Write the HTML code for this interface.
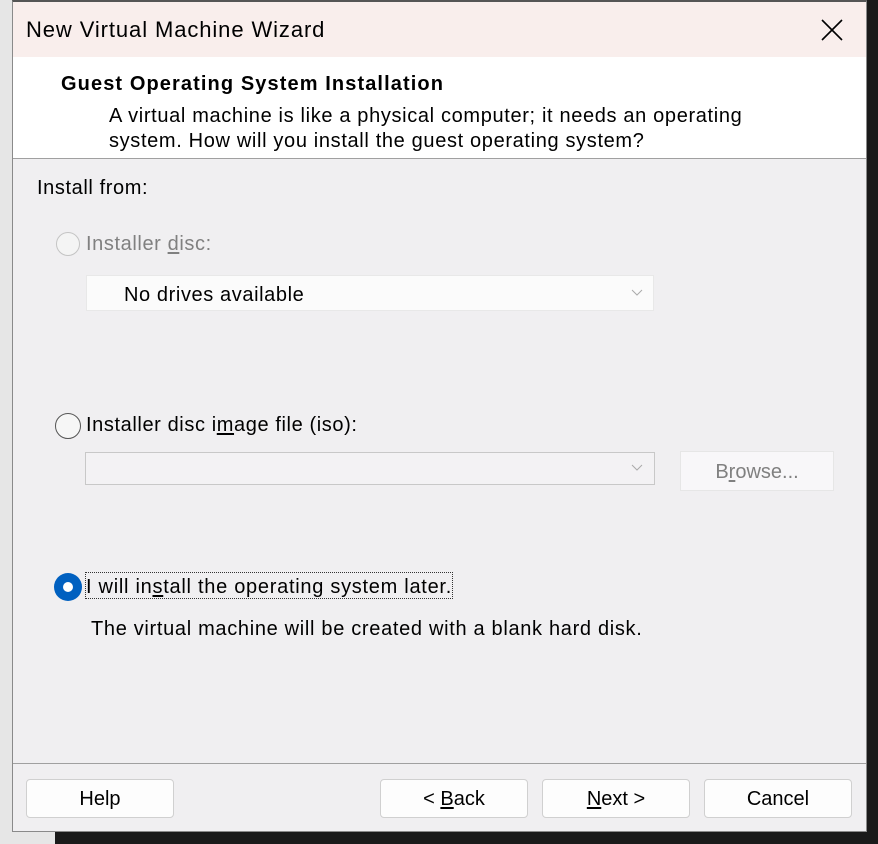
<!DOCTYPE html>
<html><head><style>
*{margin:0;padding:0;box-sizing:border-box}
body{width:878px;height:844px;background:#1a1a1a;position:relative;overflow:hidden;font-family:"Liberation Sans",sans-serif;color:#000}
.a{position:absolute}
.t{position:absolute;white-space:nowrap;font-size:20px}
.btn{position:absolute;top:779px;height:39px;width:148px;background:#fdfdfd;border:1px solid #d0d0d0;border-radius:4px;font-size:20px;text-align:center;line-height:39px}
u{text-decoration:underline;text-underline-offset:2px}
</style></head><body>
<div class="a" style="left:0;top:0;width:12px;height:844px;background:#e6e6e6"></div>
<div class="a" style="left:0;top:832px;width:55px;height:12px;background:#e6e6e6"></div>
<div class="a" style="left:12px;top:0;width:855px;height:832px;background:#f0eff1;border:1px solid #8a8a8a;border-top:2px solid #555"></div>
<div class="a" style="left:13px;top:2px;width:853px;height:55px;background:#f9eeec"></div>
<div class="t" style="left:26px;top:17px;font-size:22px;letter-spacing:0.9px">New Virtual Machine Wizard</div>
<svg class="a" style="left:820px;top:18px" width="24" height="24"><path d="M2 2L22 22M22 2L2 22" stroke="#000" stroke-width="1.6"/></svg>
<div class="a" style="left:13px;top:57px;width:853px;height:102px;background:#fff;border-bottom:1px solid #a0a0a0"></div>
<div class="t" style="left:61px;top:73px;font-weight:bold;font-size:20px;letter-spacing:1.1px">Guest Operating System Installation</div>
<div class="t" style="left:109px;top:105px;font-size:20px;letter-spacing:0.65px">A virtual machine is like a physical computer; it needs an operating</div>
<div class="t" style="left:109px;top:130px;font-size:20px;letter-spacing:0.65px">system. How will you install the guest operating system?</div>
<div class="t" style="left:37px;top:177px;letter-spacing:0.6px">Install from:</div>
<div class="a" style="left:56px;top:232px;width:24px;height:24px;border-radius:50%;border:1.5px solid #c4c4c4;background:#f4f4f4"></div>
<div class="t" style="left:86px;top:233px;color:#808080;letter-spacing:0.6px">Installer <u>d</u>isc:</div>
<div class="a" style="left:86px;top:275px;width:568px;height:36px;background:#fbfbfb;border:1px solid #e8e8e8"></div>
<div class="t" style="left:124px;top:284px;letter-spacing:0.6px">No drives available</div>
<svg class="a" style="left:630px;top:288px" width="14" height="10"><path d="M2 2L7 7L12 2" stroke="#aaa" fill="none"/></svg>
<div class="a" style="left:55px;top:413px;width:26px;height:26px;border-radius:50%;border:1.5px solid #555;background:#f6f6f6"></div>
<div class="t" style="left:86px;top:414px;letter-spacing:0.6px">Installer disc i<u>m</u>age file (iso):</div>
<div class="a" style="left:85px;top:452px;width:570px;height:33px;background:#f3f2f4;border:1px solid #c8c8c8"></div>
<svg class="a" style="left:630px;top:463px" width="14" height="10"><path d="M2 2L7 7L12 2" stroke="#aaa" fill="none"/></svg>
<div class="a" style="left:680px;top:451px;width:154px;height:40px;background:#f8f7f9;border:1px solid #e6e6e6;font-size:20px;color:#808080;text-align:center;line-height:40px">B<u>r</u>owse...</div>
<div class="a" style="left:54px;top:573px;width:28px;height:28px;border-radius:50%;background:#0060c0"></div>
<div class="a" style="left:63px;top:582px;width:10px;height:10px;border-radius:50%;background:#fff"></div>
<div class="a" style="left:85px;top:572px;width:368px;height:27px;border:1px dotted #333"></div>
<div class="t" style="left:86px;top:576px;letter-spacing:0.72px">I will in<u>s</u>tall the operating system later.</div>
<div class="t" style="left:91px;top:618px;letter-spacing:0.68px">The virtual machine will be created with a blank hard disk.</div>
<div class="a" style="left:13px;top:763px;width:853px;height:1px;background:#a0a0a0"></div>
<div class="btn" style="left:26px">Help</div>
<div class="btn" style="left:380px">&lt; <u>B</u>ack</div>
<div class="btn" style="left:542px"><u>N</u>ext &gt;</div>
<div class="btn" style="left:704px">Cancel</div>
</body></html>
